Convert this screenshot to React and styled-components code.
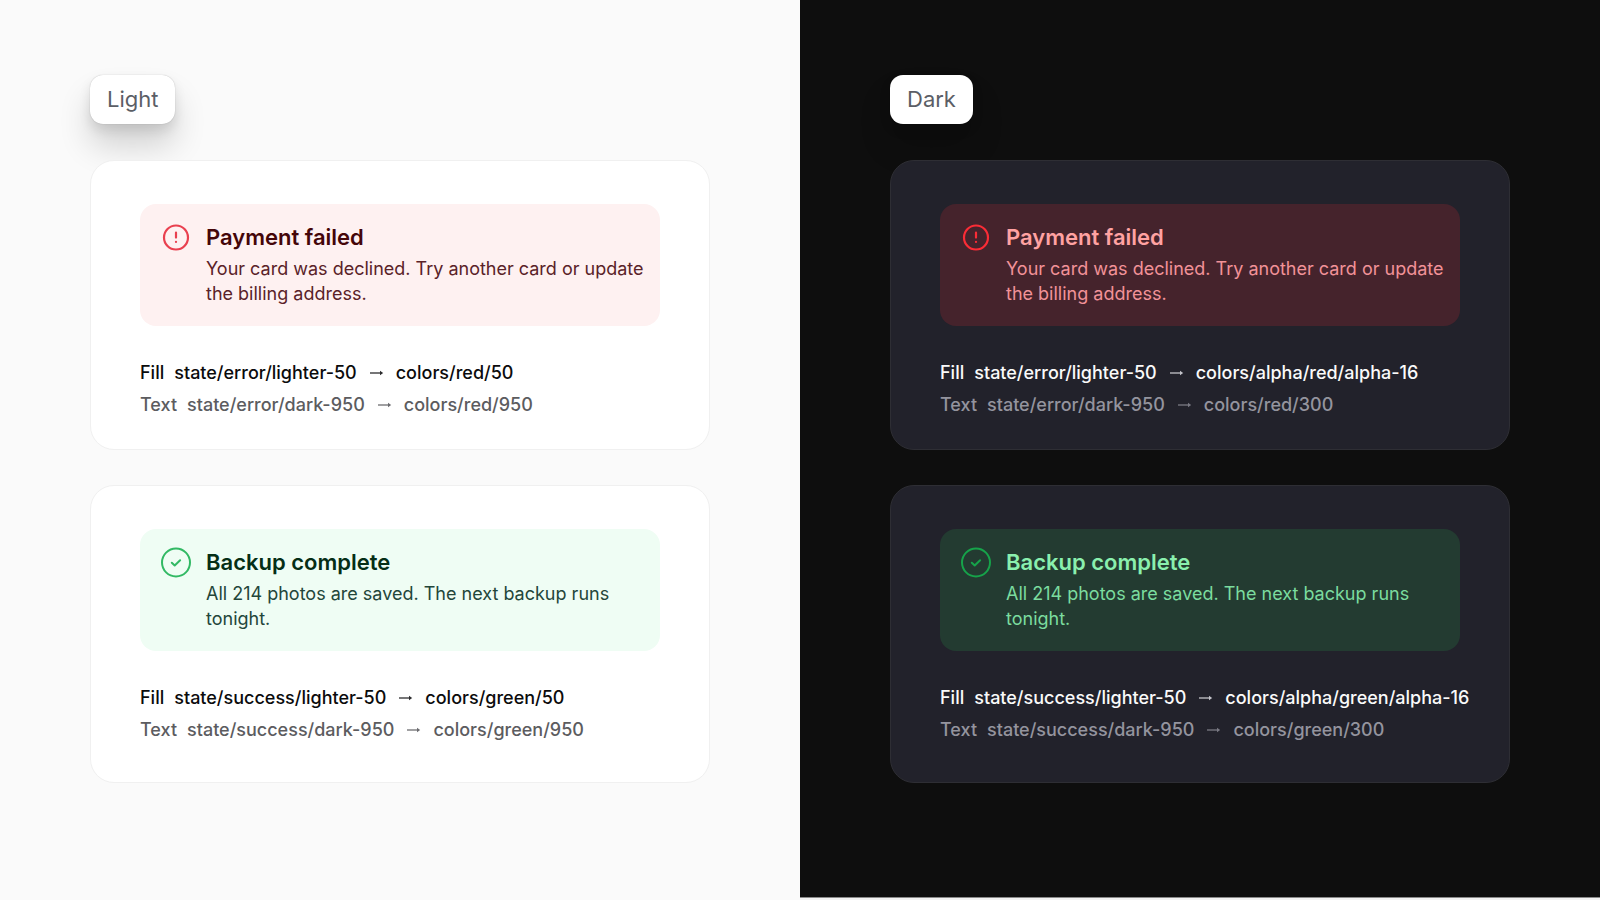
import React from "react";
import styled, { createGlobalStyle, ThemeProvider } from "styled-components";

const GlobalStyle = createGlobalStyle`
  *, *::before, *::after { box-sizing: border-box; }
  body {
    margin: 0;
    background: #f2f2f2;
    font-family: Inter, "Liberation Sans", sans-serif;
    -webkit-font-smoothing: antialiased;
  }
`;

const light = {
  page: "#fafafa",
  edge: "none",
  edgeGap: "0",
  card: "#ffffff",
  cardBorder: "#f0f0f0",
  fillText: "#0b0b0c",
  mutedText: "#5c5c5f",
  fillArrow: "#2c2c2e",
  mutedArrow: "#6c6c70",
  error: { fill: "#fef1f1", title: "#450609", text: "#5a2228", icon: "#e9404f" },
  success: { fill: "#effdf4", title: "#052e16", text: "#23463a", icon: "#32b964" },
};

const dark = {
  page: "#0e0e0e",
  edge: "1px solid #8a8a8a",
  edgeGap: "2px",
  card: "#22222b",
  cardBorder: "#2e2e34",
  fillText: "#fafafa",
  mutedText: "#94949e",
  fillArrow: "#c4c4ca",
  mutedArrow: "#7a7a84",
  error: { fill: "#45232c", title: "#ffa2a2", text: "#f29298", icon: "#fb2c36" },
  success: { fill: "#233b31", title: "#8af0ae", text: "#7bdc9f", icon: "#16a34a" },
};

const Page = styled.main`
  display: grid;
  grid-template-columns: repeat(2, minmax(0, 1fr));
  min-height: 100vh;
`;

const Panel = styled.section`
  display: flex;
  flex-direction: column;
  align-items: flex-start;
  margin-bottom: ${({ theme }) => theme.edgeGap};
  padding: 75px 90px;
  border-bottom: ${({ theme }) => theme.edge};
  background: ${({ theme }) => theme.page};
`;

const ModeTag = styled.h2`
  margin: 0 0 36px;
  padding: 0 17px;
  border-radius: 13px;
  background: #ffffff;
  color: #5b5e66;
  font-size: 22px;
  font-weight: 400;
  line-height: 49px;
  box-shadow: 0 0 1px rgba(0, 0, 0, 0.3), 0 6px 12px rgba(0, 0, 0, 0.1),
    0 22px 32px rgba(0, 0, 0, 0.16);
`;

const CardList = styled.div`
  display: flex;
  flex-direction: column;
  gap: 35px;
  width: 100%;
`;

const Card = styled.article`
  position: relative;
  padding: 43px 49px ${({ $roomy }) => ($roomy ? 36 : 28)}px;
  border: 1px solid ${({ theme }) => theme.cardBorder};
  border-radius: 24px;
  background: ${({ theme }) => theme.card};
`;

const Alert = styled.div`
  display: grid;
  grid-template-columns: 30px minmax(0, 1fr);
  column-gap: 15px;
  padding: 18px 12px 18px 21px;
  min-height: 122px;
  border-radius: 16px;
  background: ${({ theme, $tone }) => theme[$tone].fill};
`;

const AlertIcon = styled.svg`
  width: 30px;
  height: 30px;
  overflow: visible;
  fill: none;
  stroke: ${({ theme, $tone }) => theme[$tone].icon};
  stroke-width: 2;
  stroke-linecap: round;
  stroke-linejoin: round;
`;

const AlertTitle = styled.h3`
  margin: 0;
  color: ${({ theme, $tone }) => theme[$tone].title};
  font-size: 22px;
  font-weight: 600;
  line-height: 30px;
`;

const AlertText = styled.p`
  margin: 4px 0 0;
  color: ${({ theme, $tone }) => theme[$tone].text};
  font-size: 18px;
  line-height: 25px;
`;

const TokenList = styled.dl`
  margin: 31px 0 0;
`;

const TokenRow = styled.div`
  display: flex;
  gap: 10px;
  color: ${({ theme, $muted }) => ($muted ? theme.mutedText : theme.fillText)};
  font-size: 18px;
  font-weight: 500;
  line-height: 32px;
  white-space: nowrap;
`;

const TokenValue = styled.dd`
  display: flex;
  align-items: center;
  gap: 12px;
  margin: 0;
`;

const Arrow = styled.svg`
  width: 15px;
  height: 10px;
  color: ${({ theme, $muted }) => ($muted ? theme.mutedArrow : theme.fillArrow)};
`;

function ToneIcon({ tone }) {
  return (
    <AlertIcon $tone={tone} viewBox="0 0 30 30" aria-hidden="true">
      {tone === "error" ? (
        <>
          <circle cx="15" cy="15.5" r="12" strokeWidth="2.2" />
          <path d="M15 10.6v5M15 19.8v.2" strokeWidth="2.2" />
        </>
      ) : (
        <>
          <circle cx="15" cy="15.5" r="14" />
          <path d="m10.8 15.8 2.9 2.7 5.4-5.3" />
        </>
      )}
    </AlertIcon>
  );
}

function Token({ label, from, to, muted }) {
  return (
    <TokenRow $muted={muted}>
      <dt>{label}</dt>
      <TokenValue>
        <span>{from}</span>
        <Arrow $muted={muted} viewBox="0 0 15 10" role="img" aria-label="resolves to">
          <path d="M1 5h11" fill="none" stroke="currentColor" strokeWidth="1.3" />
          <path d="M11 2.8 14.2 5 11 7.2z" fill="currentColor" />
        </Arrow>
        <span>{to}</span>
      </TokenValue>
    </TokenRow>
  );
}

const alerts = [
  {
    tone: "error",
    title: "Payment failed",
    text: "Your card was declined. Try another card or update the billing address.",
  },
  {
    tone: "success",
    title: "Backup complete",
    text: "All 214 photos are saved. The next backup runs tonight.",
  },
];

const values = {
  Light: {
    error: ["colors/red/50", "colors/red/950"],
    success: ["colors/green/50", "colors/green/950"],
  },
  Dark: {
    error: ["colors/alpha/red/alpha-16", "colors/red/300"],
    success: ["colors/alpha/green/alpha-16", "colors/green/300"],
  },
};

function ModePanel({ name, theme }) {
  return (
    <ThemeProvider theme={theme}>
      <Panel>
        <ModeTag>{name}</ModeTag>
        <CardList>
          {alerts.map(({ tone, title, text }) => (
            <Card key={tone} $roomy={tone === "success"}>
              <Alert $tone={tone}>
                <ToneIcon tone={tone} />
                <div>
                  <AlertTitle $tone={tone}>{title}</AlertTitle>
                  <AlertText $tone={tone}>{text}</AlertText>
                </div>
              </Alert>
              <TokenList>
                <Token label="Fill" from={`state/${tone}/lighter-50`} to={values[name][tone][0]} />
                <Token label="Text" from={`state/${tone}/dark-950`} to={values[name][tone][1]} muted />
              </TokenList>
            </Card>
          ))}
        </CardList>
      </Panel>
    </ThemeProvider>
  );
}

export default function App() {
  return (
    <>
      <GlobalStyle />
      <Page>
        <ModePanel name="Light" theme={light} />
        <ModePanel name="Dark" theme={dark} />
      </Page>
    </>
  );
}
